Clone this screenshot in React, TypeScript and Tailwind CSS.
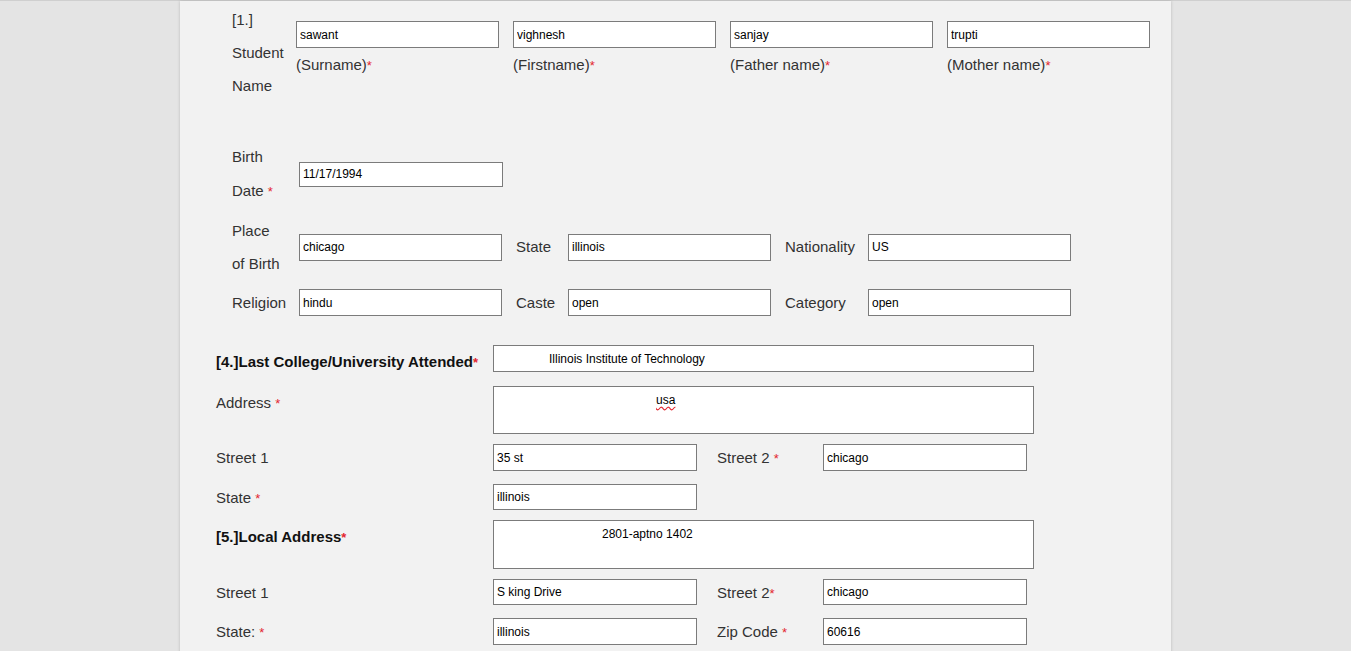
import React from 'react';

const Req = () => <span className="text-[13px] text-[#e3262f]">*</span>;

const Field = ({ value, className = '' }: { value: string; className?: string }) => (
  <input
    type="text"
    defaultValue={value}
    className={`block border border-[#7b7b7b] bg-white px-[3px] text-[12px] text-black outline-none ${className}`}
  />
);

const Box = ({ children, className = '' }: { children: React.ReactNode; className?: string }) => (
  <div
    role="textbox"
    className={`w-[541px] border border-[#7b7b7b] bg-white pt-[6px] text-[12px] leading-[14px] text-black ${className}`}
  >
    {children}
  </div>
);

const names = [
  { value: 'sawant', caption: '(Surname)' },
  { value: 'vighnesh', caption: '(Firstname)' },
  { value: 'sanjay', caption: '(Father name)' },
  { value: 'trupti', caption: '(Mother name)' },
];

export default function App() {
  return (
    <div className="min-h-screen border-t border-[#cfcfcf] bg-[#e4e4e4] font-['Liberation_Sans',Arial,sans-serif]">
      <div className="mx-auto min-h-[650px] w-[991px] bg-[#f2f2f2] pb-10 shadow-[0_0_3px_rgba(0,0,0,0.18)]">
        {/* [1.] personal details */}
        <div className="pl-[52px] pt-[2px] text-[15px] text-[#333]">
          <div className="flex">
            <div className="w-[64px] leading-[33px]">
              <div>[1.]</div>
              <div>Student</div>
              <div>Name</div>
            </div>
            <div className="mt-[18px] flex gap-[14px]">
              {names.map((n) => (
                <div key={n.caption} className="w-[203px]">
                  <Field value={n.value} className="h-[27px] w-[203px]" />
                  <div className="mt-[8px] leading-[18px]">
                    {n.caption}
                    <Req />
                  </div>
                </div>
              ))}
            </div>
          </div>

          <div className="mt-[37px] flex items-center">
            <div className="w-[67px] pt-[1px] leading-[34px]">
              <div>Birth</div>
              <div>
                Date <Req />
              </div>
            </div>
            <Field value="11/17/1994" className="h-[25px] w-[204px]" />
          </div>

          <div className="mt-[5px] flex items-center">
            <div className="w-[67px] leading-[33px]">
              <div>Place</div>
              <div>of Birth</div>
            </div>
            <Field value="chicago" className="h-[27px] w-[203px]" />
            <div className="ml-[14px] w-[52px]">State</div>
            <Field value="illinois" className="h-[27px] w-[203px]" />
            <div className="ml-[14px] w-[83px]">Nationality</div>
            <Field value="US" className="h-[27px] w-[203px]" />
          </div>

          <div className="mt-[6px] flex h-[33px] items-center">
            <div className="w-[67px] pt-[1px]">Religion</div>
            <Field value="hindu" className="h-[27px] w-[203px]" />
            <div className="ml-[14px] w-[52px] pt-[1px]">Caste</div>
            <Field value="open" className="h-[27px] w-[203px]" />
            <div className="ml-[14px] w-[83px] pt-[1px]">Category</div>
            <Field value="open" className="h-[27px] w-[203px]" />
          </div>
        </div>

        {/* [4.] and [5.] college and address */}
        <div className="pl-[36px] text-[15px] leading-[20px] text-[#333]">
          <div className="mt-[26px] flex items-start">
            <div className="w-[277px] pt-[7px] font-bold text-[#111]">
              [4.]Last College/University Attended<Req />
            </div>
            <Field value="Illinois Institute of Technology" className="h-[27px] w-[541px] pl-[55px]" />
          </div>

          <div className="mt-[13px] flex items-start">
            <div className="w-[277px] pt-[7px]">
              Address <Req />
            </div>
            <Box className="h-[48px] pl-[162px]">
              <span className="underline decoration-[#e3262f] decoration-wavy underline-offset-2">usa</span>
            </Box>
          </div>

          <div className="mt-[10px] flex items-start">
            <div className="w-[277px] pt-[4px]">Street 1</div>
            <Field value="35 st" className="h-[27px] w-[204px]" />
            <div className="ml-[20px] w-[106px] pt-[4px]">
              Street 2 <Req />
            </div>
            <Field value="chicago" className="h-[27px] w-[204px]" />
          </div>

          <div className="mt-[13px] flex items-start">
            <div className="w-[277px] pt-[4px]">
              State <Req />
            </div>
            <Field value="illinois" className="h-[26px] w-[204px]" />
          </div>

          <div className="mt-[10px] flex items-start">
            <div className="w-[277px] pt-[7px] font-bold text-[#111]">
              [5.]Local Address<Req />
            </div>
            <Box className="h-[49px] pl-[108px]">2801-aptno 1402</Box>
          </div>

          <div className="mt-[10px] flex items-start">
            <div className="w-[277px] pt-[4px]">Street 1</div>
            <Field value="S king Drive" className="h-[26px] w-[204px]" />
            <div className="ml-[20px] w-[106px] pt-[4px]">
              Street 2<Req />
            </div>
            <Field value="chicago" className="h-[26px] w-[204px]" />
          </div>

          <div className="mt-[13px] flex items-start">
            <div className="w-[277px] pt-[4px]">
              State: <Req />
            </div>
            <Field value="illinois" className="h-[27px] w-[204px]" />
            <div className="ml-[20px] w-[106px] pt-[4px]">
              Zip Code <Req />
            </div>
            <Field value="60616" className="h-[27px] w-[204px]" />
          </div>
        </div>
      </div>
    </div>
  );
}
